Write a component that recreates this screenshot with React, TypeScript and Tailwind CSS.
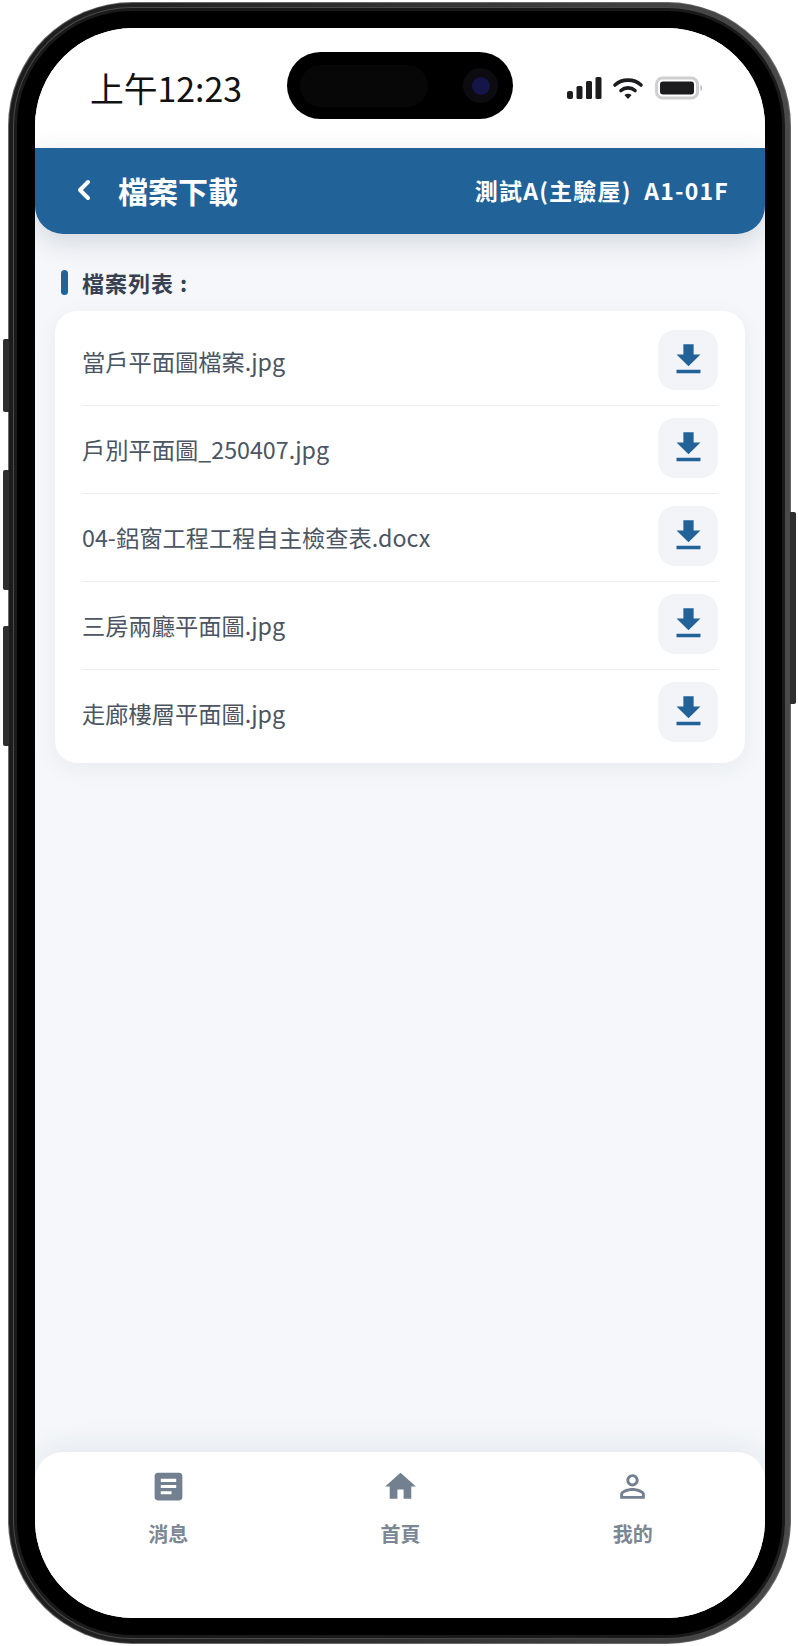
const cjk = "font-['Noto_Sans_CJK_TC','Noto_Sans',sans-serif]";

const files = [
  "當戶平面圖檔案.jpg",
  "戶別平面圖_250407.jpg",
  "04-鋁窗工程工程自主檢查表.docx",
  "三房兩廳平面圖.jpg",
  "走廊樓層平面圖.jpg",
];

const tabs = [
  {
    label: "消息",
    path: "M19 3H5c-1.1 0-2 .9-2 2v14c0 1.1.9 2 2 2h14c1.1 0 2-.9 2-2V5c0-1.1-.9-2-2-2zm-5 14H7v-2h7v2zm3-4H7v-2h10v2zm0-4H7V7h10v2z",
  },
  { label: "首頁", path: "M10 20v-6h4v6h5v-8h3L12 3 2 12h3v8z" },
  {
    label: "我的",
    path: "M12 5.9c1.16 0 2.1.94 2.1 2.1s-.94 2.1-2.1 2.1S9.9 9.16 9.9 8s.94-2.1 2.1-2.1m0 9c2.97 0 6.1 1.46 6.1 2.1v1.1H5.9V17c0-.64 3.13-2.1 6.1-2.1M12 4C9.79 4 8 5.79 8 8s1.79 4 4 4 4-1.79 4-4-1.79-4-4-4zm0 9c-2.67 0-8 1.34-8 4v3h16v-3c0-2.66-5.33-4-8-4z",
  },
];

const StatusIcons = () => (
  <div className="flex items-center gap-[10px]">
    <svg width="35" height="24" viewBox="0 0 35 24" fill="#1c1c1e">
      <rect x="0" y="15" width="6" height="8" rx="2" />
      <rect x="9.5" y="10" width="6" height="13" rx="1.5" />
      <rect x="19" y="5" width="6" height="18" rx="1.5" />
      <rect x="28.5" y="1" width="6" height="22" rx="1.5" />
    </svg>
    <svg width="32" height="24" viewBox="0 0 32 24" fill="none" stroke="#1c1c1e" strokeWidth="3.6" strokeLinecap="round">
      <path d="M3 9 C10 2.5 22 2.5 29 9" />
      <path d="M9 14.5 C13 11 19 11 23 14.5" />
      <path d="M16 23 L12.4 19 C14.5 17.4 17.5 17.4 19.6 19 Z" fill="#1c1c1e" stroke="none" />
    </svg>
    <svg width="48" height="24" viewBox="0 0 48 24" className="ml-[1px]">
      <rect x="1.5" y="2" width="41" height="20" rx="6" fill="none" stroke="#cfcfcf" strokeWidth="3" />
      <rect x="5" y="5.5" width="34" height="13" rx="3" fill="#1c1c1e" />
      <path d="M45.5 9 C47.5 10 47.5 14 45.5 15 Z" fill="#b5b5b5" />
    </svg>
  </div>
);

const DownloadButton = () => (
  <button className="flex h-[60px] w-[60px] shrink-0 items-center justify-center rounded-[17px] bg-[#f2f4f7]">
    <svg width="41" height="41" viewBox="0 0 24 24" fill="#216299" className="-mt-[2px]">
      <path d="M19 9h-4V3H9v6H5l7 7 7-7zM5 18v2h14v-2H5z" />
    </svg>
  </button>
);

const App = () => {
  return (
    <div className={`relative h-[1646px] w-[798px] overflow-hidden bg-white pl-[8px] pt-[2px] ${cjk}`}>
      <div className="absolute left-[3px] top-[339px] h-[73px] w-[6px] rounded-l-[2px] bg-[#2e2e2e]" />
      <div className="absolute left-[3px] top-[470px] h-[120px] w-[6px] rounded-l-[2px] bg-[#2e2e2e]" />
      <div className="absolute left-[3px] top-[626px] h-[120px] w-[6px] rounded-l-[2px] bg-[#2e2e2e]" />
      <div className="absolute left-[790px] top-[512px] h-[192px] w-[6px] rounded-r-[2px] bg-[#2e2e2e]" />

      {/* phone body: layered rings for the metal edge */}
      <div className="h-[1642px] w-[783px] rounded-[124px] bg-[#6a6a6a] p-[1px]">
        <div className="h-full w-full rounded-[123px] bg-linear-to-r from-[#1c1c1c] to-[#4a4a4a] p-[4px]">
          <div className="h-full w-full rounded-[119px] bg-[#4a4a4a] p-[1px]">
            <div className="h-full w-full rounded-[118px] bg-[#1a1a1a] p-[3px]">
              <div className="h-full w-full rounded-[115px] bg-black pb-[17px] pl-[18px] pr-[17px] pt-[17px]">
                <div className="flex h-full w-full flex-col overflow-hidden rounded-[98px] bg-[#f5f7fa]">
                  <div className="flex h-[120px] shrink-0 items-center bg-white pb-[5px] pl-[55px] pr-[62px]">
                    <span className="mt-[4px] w-[197px] text-[33.8px] leading-none text-[#111]">上午12:23</span>
                    <div className="flex h-[67px] w-[226px] items-center rounded-[34px] bg-black pl-[13px] pr-[15px]">
                      <div className="h-[42px] w-[128px] rounded-[21px] bg-[#070707]" />
                      <div className="ml-auto flex h-[35px] w-[35px] items-center justify-center rounded-full bg-[#0b0b10]">
                        <div className="h-[18px] w-[18px] rounded-full bg-[#15154a]" />
                      </div>
                    </div>
                    <div className="ml-auto mt-[5px]">
                      <StatusIcons />
                    </div>
                  </div>

                  <header className="flex h-[86px] shrink-0 items-center rounded-b-[28px] bg-[#216299] pb-[2px] pl-[40px] pr-[36px] text-white shadow-[0_8px_28px_rgba(30,50,80,0.16)]">
                    <svg width="18" height="24" viewBox="0 0 18 24" fill="none" stroke="white" strokeWidth="4" strokeLinecap="round" strokeLinejoin="round">
                      <path d="M13 4 L5 12 L13 20" />
                    </svg>
                    <h1 className="ml-[25px] text-[30px] font-bold leading-none">檔案下載</h1>
                    <span className="ml-auto text-[23px] font-semibold leading-none tracking-[1.2px]">
                      測試A(主驗屋)&nbsp;&nbsp;A1-01F
                    </span>
                  </header>

                  <main className="flex-1 px-[20px] pt-[35px]">
                    <div className="mb-[16px] ml-[6px] flex h-[26px] items-center">
                      <span className="h-[25px] w-[7px] rounded-full bg-[#216299]" />
                      <span className="ml-[14px] text-[22px] font-bold leading-none tracking-[1px] text-[#374151]">檔案列表 :</span>
                    </div>
                    <div className="rounded-[22px] bg-white px-[27px] pb-[21px] pt-[19px] shadow-[0_6px_24px_rgba(30,50,80,0.06)]">
                      {files.map((name, i) => (
                        <div
                          key={name}
                          className={`flex items-center justify-between ${
                            i > 0 ? "mt-[13px] border-t border-[#e9ecf0] pt-[12px]" : ""
                          } ${i < files.length - 1 ? "pb-[2px]" : ""}`}
                        >
                          <span className="mt-[4px] text-[23.25px] leading-none text-[#4b5563]">{name}</span>
                          <DownloadButton />
                        </div>
                      ))}
                    </div>
                  </main>

                  <nav className="flex h-[166px] shrink-0 rounded-t-[28px] bg-white pl-[17px] pr-[16px] pt-[16px] shadow-[0_-8px_28px_rgba(30,50,80,0.07)]">
                    {tabs.map((tab) => (
                      <div key={tab.label} className="flex flex-1 flex-col items-center">
                        <svg width="37" height="37" viewBox="0 0 24 24" fill="#72808f">
                          <path d={tab.path} />
                        </svg>
                        <span className="mt-[19px] text-[20px] font-bold leading-none text-[#7b8794]">{tab.label}</span>
                      </div>
                    ))}
                  </nav>
                </div>
              </div>
            </div>
          </div>
        </div>
      </div>
    </div>
  );
};

export default App;
